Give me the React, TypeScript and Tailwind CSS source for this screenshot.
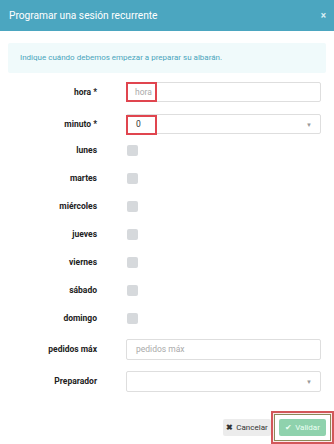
import React from "react";

const font = { fontFamily: "Roboto, 'Liberation Sans', sans-serif" };

function Label({ children }: { children: React.ReactNode }) {
  return (
    <div className="w-[97px] shrink-0 text-right text-[8.5px] font-bold text-[#222] leading-none">
      {children}
    </div>
  );
}

function CheckRow({ label }: { label: string }) {
  return (
    <div className="flex h-[28px] items-center">
      <Label>{label}</Label>
      <div className="ml-[30px] h-[11px] w-[11px] rounded-[2px] bg-[#d6d9dc]" />
    </div>
  );
}

export default function App() {
  const days = ["lunes", "martes", "miércoles", "jueves", "viernes", "sábado", "domingo"];
  return (
    <div className="h-[444px] w-[334px] bg-white overflow-hidden" style={font}>
      <div className="flex h-[31px] items-center justify-between bg-[#4ba6c0] pl-[9px] pr-[8px]">
        <span className="text-[10.2px] text-white">Programar una sesión recurrente</span>
        <span className="text-[10px] font-bold text-[#d8eef4]">×</span>
      </div>
      <div className="px-[8px] pt-[12px]">
        <div className="flex h-[30px] items-center rounded-[2px] bg-[#f0fafb] pl-[12px] text-[8px] text-[#4aa5bb]">
          Indique cuándo debemos empezar a preparar su albarán.
        </div>
      </div>
      <div className="pr-[13px] pt-[9px]">
        <div className="flex h-[20px] items-center">
          <Label>hora *</Label>
          <div className="relative ml-[29px] flex h-[20px] flex-1 items-center rounded-[2px] border border-[#dedede] pl-[8px] text-[8.5px] text-[#aaa]">
            hora
            <div className="absolute left-[-1px] top-[-1px] h-[20px] w-[31px] border-2 border-[#e0454f]" />
          </div>
        </div>
        <div className="mt-[12px] flex h-[20px] items-center">
          <Label>minuto *</Label>
          <div className="relative ml-[29px] flex h-[20px] flex-1 items-center justify-between rounded-[2px] border border-[#dedede] pl-[9px] pr-[8px] text-[8.5px] text-[#333]">
            <span>0</span>
            <span className="text-[6px] text-[#999]">▼</span>
            <div className="absolute left-[-1px] top-[0px] h-[20px] w-[31px] border-2 border-[#e0454f]" />
          </div>
        </div>
        <div className="mt-[2px]">
          {days.map((d) => (
            <CheckRow key={d} label={d} />
          ))}
        </div>
        <div className="mt-[7px] flex h-[21px] items-center">
          <Label>pedidos máx</Label>
          <div className="ml-[29px] flex h-[21px] flex-1 items-center rounded-[2px] border border-[#dedede] pl-[9px] text-[8.5px] text-[#aaa]">
            pedidos máx
          </div>
        </div>
        <div className="mt-[11px] flex h-[21px] items-center">
          <Label>Preparador</Label>
          <div className="ml-[29px] flex h-[21px] flex-1 items-center justify-end rounded-[2px] border border-[#dedede] pr-[8px]">
            <span className="text-[6px] text-[#999]">▼</span>
          </div>
        </div>
      </div>
      <div className="mt-[19px] flex items-center justify-end">
        <div className="flex h-[17px] w-[48px] items-center justify-center gap-[3px] rounded-[2px] bg-[#ececec] text-[8px] text-[#333]">
          <span className="text-[8px] font-bold">✖</span>
          <span>Cancelar</span>
        </div>
        <div className="border-2 border-[#d2575a] bg-[#fbe9ea] p-[1px]">
          <div className="border border-[#8a8a5a] bg-white px-[4px] py-[4px]">
            <div className="flex h-[17px] w-[47px] items-center justify-center gap-[3px] rounded-[2px] bg-[#8fd2ad] text-[8px] text-[#eafff3]">
              <span className="text-[8px]">✔</span>
              <span>Validar</span>
            </div>
          </div>
        </div>
      </div>
    </div>
  );
}
